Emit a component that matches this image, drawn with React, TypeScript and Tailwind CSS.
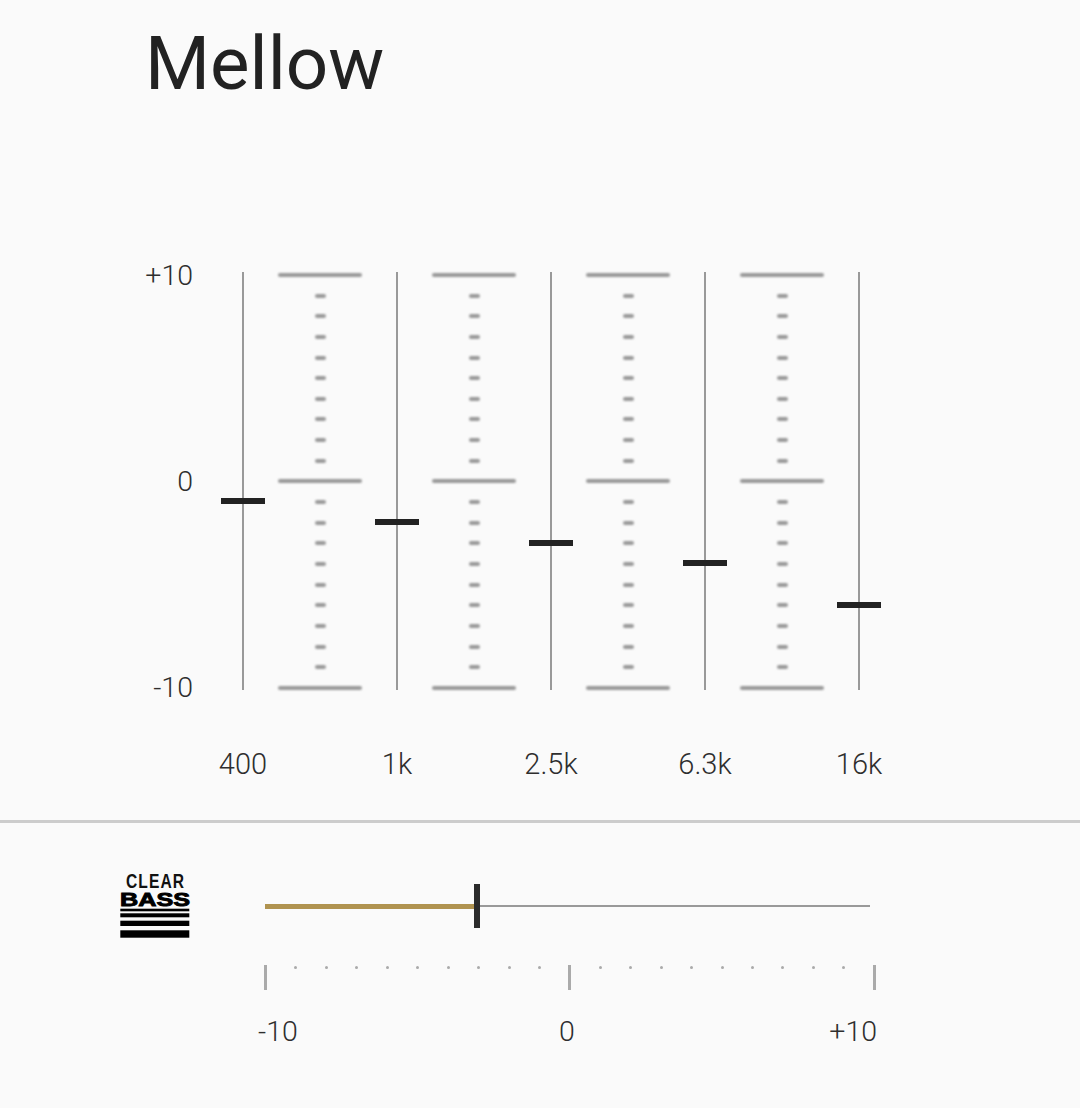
const bands = [
  { label: '400', offset: 'top-[226px]' },
  { label: '1k', offset: 'top-[247px]' },
  { label: '2.5k', offset: 'top-[268px]' },
  { label: '6.3k', offset: 'top-[288px]' },
  { label: '16k', offset: 'top-[330px]' },
]

const bassDots = [0, 1, 2, 3, 4, 5, 6, 7, 8]

function EqSlider({ offset }: { offset: string }) {
  return (
    <div className="relative flex w-[44px] justify-center">
      <div className="w-[2px] bg-[#999999] blur-[0.5px]" />
      <div className={`absolute left-0 h-[6px] w-[44px] bg-[#222222] ${offset}`} />
    </div>
  )
}

function ScaleBar() {
  return <div className="h-[4px] w-[84px] rounded-full bg-[#999999] blur-[1px]" />
}

function ScaleTicks() {
  return (
    <>
      {[0, 1, 2, 3, 4, 5, 6, 7, 8].map((i) => (
        <div key={i} className="h-[4px] w-[11px] rounded-full bg-[#999999] blur-[1px]" />
      ))}
    </>
  )
}

function Scale() {
  return (
    <div className="flex w-[84px] flex-col items-center justify-between pt-[1px]">
      <ScaleBar />
      <ScaleTicks />
      <ScaleBar />
      <ScaleTicks />
      <ScaleBar />
    </div>
  )
}

function ClearBassLogo() {
  return (
    <svg width="70" height="66" viewBox="0 0 70 66" className="shrink-0 overflow-visible">
      <text
        transform="translate(35 14) scale(0.8 1)"
        textAnchor="middle"
        textLength="72.5"
        lengthAdjust="spacing"
        fontFamily="'Liberation Sans', sans-serif"
        fontWeight="700"
        fontSize="19.5"
        fill="#111"
      >
        CLEAR
      </text>
      <text
        x="35"
        y="32"
        textAnchor="middle"
        textLength="70"
        lengthAdjust="spacingAndGlyphs"
        fontFamily="'Liberation Sans', sans-serif"
        fontWeight="700"
        fontSize="19"
        stroke="#000"
        strokeWidth="0.9"
        fill="#000"
      >
        BASS
      </text>
      <rect x="0.3" y="34.7" width="69" height="2.6" fill="#000" />
      <rect x="0.3" y="39.3" width="69" height="4" fill="#000" />
      <rect x="0.3" y="46.7" width="69" height="5.3" fill="#000" />
      <rect x="0.3" y="56.3" width="69" height="7.4" fill="#000" />
    </svg>
  )
}

export default function App() {
  return (
    <div
      className="flex h-[1108px] w-[1080px] flex-col overflow-hidden bg-[#fafafa] text-[#2e2e2e]"
      style={{ fontFamily: 'Roboto, sans-serif' }}
    >
      {/* Title */}
      <h1 className="pt-[22px] pl-[145px] text-[74.5px] leading-[84px] font-normal text-[#222222]">Mellow</h1>

      {/* Equalizer */}
      <div className="mt-[166px] flex h-[418px] pl-[146px]">
        <div className="mt-[1px] mr-[28px] -mb-[1px] flex w-[47px] flex-col items-end justify-between text-[28.5px] font-light">
          <span className="leading-[6px]">+10</span>
          <span className="leading-[6px]">0</span>
          <span className="leading-[6px]">-10</span>
        </div>
        <div className="flex gap-[13px]">
          {bands.map((band, i) => (
            <div key={band.label} className="flex gap-[13px]">
              <EqSlider offset={band.offset} />
              {i < bands.length - 1 && <Scale />}
            </div>
          ))}
        </div>
      </div>

      {/* Band labels */}
      <div className="mt-[57px] flex pl-[166px] text-[29px] leading-[34px] font-light">
        {bands.map((band) => (
          <span key={band.label} className="w-[154px] text-center">
            {band.label}
          </span>
        ))}
      </div>

      <div className="mt-[39px] h-[3px] bg-[#cccccc]" />

      {/* Clear Bass */}
      <div className="mt-[51px] flex pl-[120px]">
        <ClearBassLogo />
        <div className="ml-[75px] flex w-[610px] flex-col">
          <div className="relative mt-[10px] flex h-[44px] w-[605px] items-center">
            <div className="h-[5px] w-[212px] bg-[#b09350]" />
            <div className="h-[2px] flex-1 bg-[#999999] blur-[0.4px]" />
            <div className="absolute top-0 left-[209px] h-[44px] w-[6px] bg-[#2b2b2b]" />
          </div>
          <div className="mt-[37px] -ml-[1px] flex h-[25px] w-[612px] items-start justify-between">
            <div className="h-[25px] w-[3px] bg-[#aaaaaa]" />
            {bassDots.map((i) => (
              <div key={i} className="mt-[1px] size-[3px] rounded-full bg-[#aaaaaa]" />
            ))}
            <div className="h-[25px] w-[3px] bg-[#aaaaaa]" />
            {bassDots.map((i) => (
              <div key={i} className="mt-[1px] size-[3px] rounded-full bg-[#aaaaaa]" />
            ))}
            <div className="h-[25px] w-[3px] bg-[#aaaaaa]" />
          </div>
          <div className="mt-[25px] -ml-[7px] flex w-[619px] text-[28.5px] leading-[34px] font-light">
            <span className="w-[301px]">-10</span>
            <span>0</span>
            <span className="ml-auto">+10</span>
          </div>
        </div>
      </div>
    </div>
  )
}
